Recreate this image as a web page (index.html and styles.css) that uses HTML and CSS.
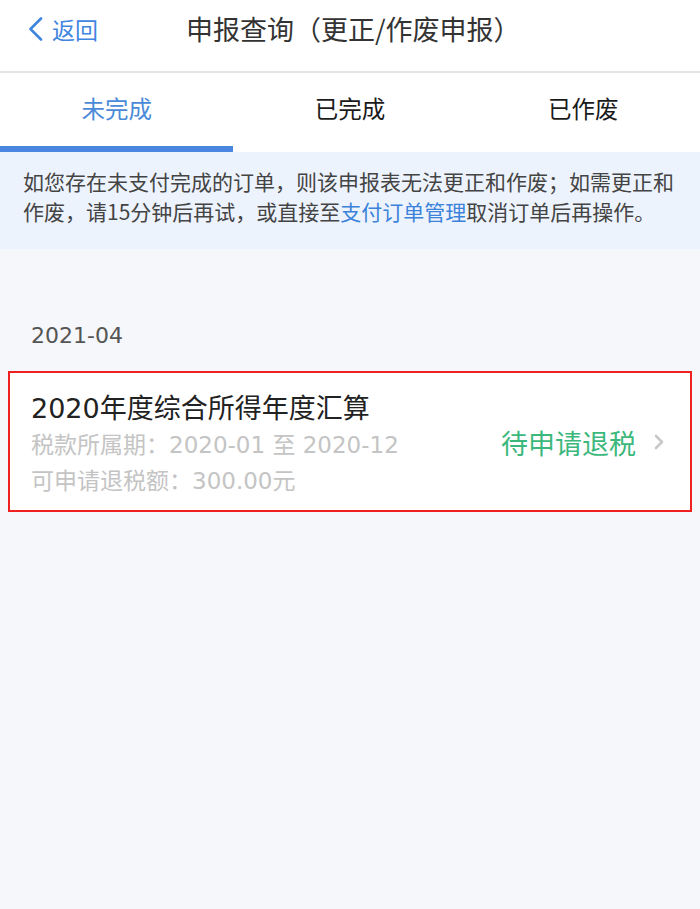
FILE: index.html
```html
<!DOCTYPE html>
<html lang="zh-CN">
<head>
<meta charset="utf-8">
<link rel="stylesheet" href="styles.css">
</head>
<body>
<div class="page">
  <header class="nav">
    <div class="back">
      <svg class="back-icon" width="18" height="24" viewBox="0 0 18 24"><path d="M14 1.5 L3.5 12 L14 22.5" fill="none" stroke="#3f86e0" stroke-width="2.6" stroke-linecap="round" stroke-linejoin="round"/></svg>
      <span>返回</span>
    </div>
    <h1 class="title">申报查询（更正/作废申报）</h1>
  </header>
  <nav class="tabs">
    <div class="tab active">未完成</div>
    <div class="tab">已完成</div>
    <div class="tab">已作废</div>
  </nav>
  <div class="notice">如您存在未支付完成的订单，则该申报表无法更正和作废；如需更正和作废，请15分钟后再试，或直接至<span class="link">支付订单管理</span>取消订单后再操作。</div>
  <div class="month">2021-04</div>
  <div class="card">
    <div class="card-info">
      <div class="card-title">2020年度综合所得年度汇算</div>
      <div class="card-sub">税款所属期：2020-01 至 2020-12</div>
      <div class="card-sub">可申请退税额：300.00元</div>
    </div>
    <div class="status">待申请退税</div>
    <svg class="arrow" width="10" height="16" viewBox="0 0 10 16"><path d="M2 2 L8 8 L2 14" fill="none" stroke="#c8c8c8" stroke-width="2.6" stroke-linecap="round" stroke-linejoin="round"/></svg>
  </div>
</div>
</body>
</html>
```
FILE: styles.css
```css
* { box-sizing: border-box; }
html, body { margin: 0; padding: 0; }
body {
  font-family: "DejaVu Sans", "Noto Sans CJK SC", sans-serif;
  background: #f5f7fa;
  width: 700px;
  height: 909px;
  overflow: hidden;
}
.page { display: flex; flex-direction: column; }
.nav {
  height: 73px;
  background: #fff;
  border-bottom: 2px solid #e4e4e4;
  display: flex;
  align-items: center;
  padding-bottom: 14px;
}
.back {
  display: flex;
  align-items: center;
  padding-left: 27px;
  color: #3f86e0;
  font-family: "Noto Sans CJK SC", sans-serif;
  font-size: 23px;
  gap: 7px;
}
.title {
  margin: 0 0 0 88px;
  font-family: "Noto Sans CJK SC", sans-serif;
  font-size: 27px;
  font-weight: 400;
  color: #333;
}
.tabs {
  display: flex;
  background: #fff;
  height: 79px;
}
.tab {
  flex: 1;
  display: flex;
  align-items: center;
  justify-content: center;
  font-family: "Noto Sans CJK SC", sans-serif;
  font-size: 23.5px;
  color: #1a1a1a;
  padding-bottom: 4px;
  border-bottom: 6px solid transparent;
}
.tab.active {
  color: #4a8ad8;
  border-bottom-color: #4a86e0;
}
.notice {
  background: #edf3fd;
  color: #444;
  font-family: "Noto Sans CJK SC", sans-serif;
  font-size: 21px;
  line-height: 30px;
  padding: 14px 18px 23px 23px;
  height: 97px;
}
.link { color: #3a82da; }
.month {
  font-size: 22px;
  color: #555;
  padding: 72px 0 0 31px;
  height: 120px;
  line-height: 30px;
}
.card {
  margin: 2px 8px 0 8px;
  height: 141px;
  background: #fff;
  border: 2px solid #f02020;
  display: flex;
  align-items: center;
  padding: 7px 26px 0 21px;
}
.card-info { flex: 1; display: flex; flex-direction: column; }
.card-title {
  font-size: 27px;
  color: #222;
  line-height: 36px;
}
.card-sub {
  font-size: 23px;
  color: #c4c4c4;
  line-height: 36px;
}
.status {
  color: #3cb87c;
  font-family: "Noto Sans CJK SC", sans-serif;
  font-size: 27px;
  margin-right: 18px;
  margin-top: -5px;
}
.arrow { margin-top: -6px; }
```
